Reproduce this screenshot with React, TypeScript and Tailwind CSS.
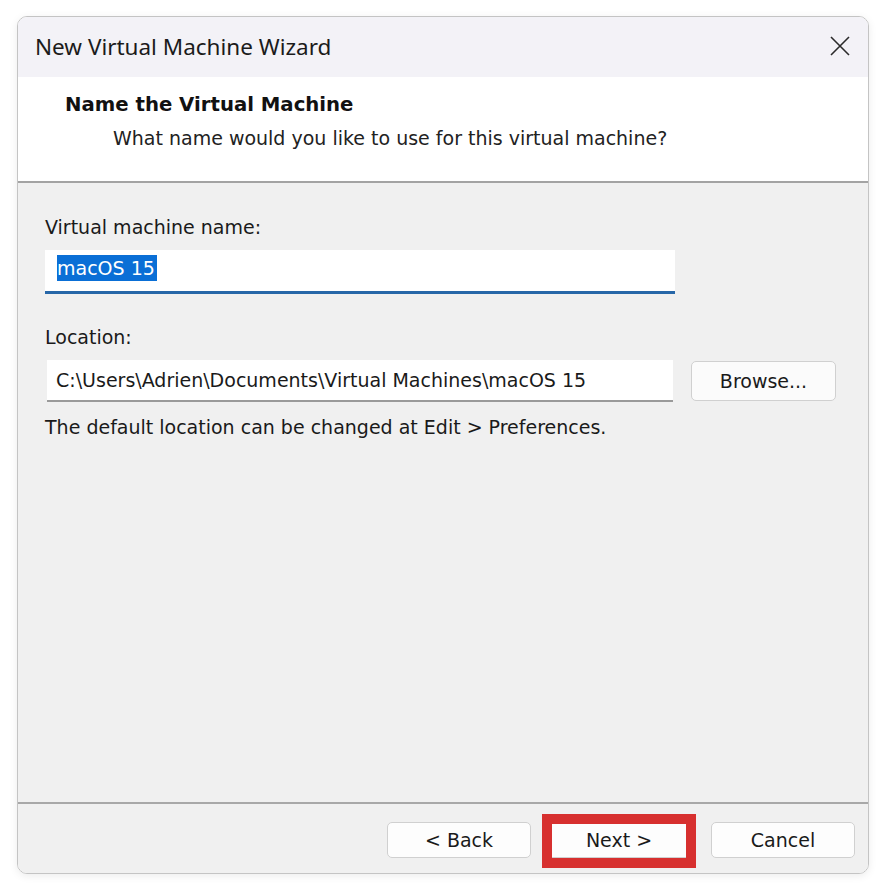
import React from 'react';

const body = { fontFamily: '"DejaVu Sans", Verdana, sans-serif' };
const title = { fontFamily: '"Noto Sans", "Open Sans", sans-serif' };

const Button = ({ label, highlight }: { label: string; highlight?: boolean }) => (
  <div className="relative">
    <button
      className="w-[144px] h-[36px] rounded-[5px] border border-[#d0d0d0] bg-[#fdfdfd] text-[19px] text-[#1a1a1a] flex items-center justify-center"
      style={body}
    >
      {label}
    </button>
    {highlight && (
      <div className="absolute -top-[8px] -bottom-[10px] -left-[5px] -right-[5px] border-[10px] border-[#d7302f] pointer-events-none" />
    )}
  </div>
);

export default function App() {
  return (
    <div className="w-[888px] h-[892px] bg-white pt-[16px] pl-[17px]">
      <div className="w-[852px] h-[858px] rounded-[10px] border border-[#c4c4c4] shadow-[0_2px_8px_rgba(0,0,0,0.08)] overflow-hidden flex flex-col">
        {/* title bar */}
        <div className="h-[60px] bg-[#f3f2f7] flex items-center justify-between pl-[17px] pr-[17px]">
          <span className="text-[22.5px] text-[#1b1b1b]" style={title}>
            New Virtual Machine Wizard
          </span>
          <svg width="22" height="22" viewBox="0 0 22 22" className="mt-[-2px]">
            <path d="M2 2 L20 20 M20 2 L2 20" stroke="#2b2b2b" strokeWidth="1.6" />
          </svg>
        </div>

        {/* header */}
        <div className="h-[106px] bg-white border-b-2 border-[#a3a3a3] pt-[16px] pl-[47px]" style={body}>
          <div className="text-[19.7px] font-bold text-[#111] leading-[24px]">Name the Virtual Machine</div>
          <div className="text-[19px] text-[#222] leading-[24px] mt-[9px] pl-[48px]">
            What name would you like to use for this virtual machine?
          </div>
        </div>

        {/* body */}
        <div className="flex-1 bg-[#f0f0f0] pt-[33px] pl-[27px] text-[19px] text-[#1a1a1a]" style={body}>
          <div className="leading-[22px]">Virtual machine name:</div>
          <div className="mt-[12px] w-[630px] h-[44px] bg-white border-b-[3px] border-[#2767a8] pl-[12px] pt-[4px]">
            <span className="inline-block bg-[#0a6fd6] text-white leading-[26px] pr-[2px]">macOS 15</span>
          </div>

          <div className="mt-[32px] leading-[22px]">Location:</div>
          <div className="mt-[12px] flex items-center">
            <div className="w-[626px] h-[42px] ml-[2px] bg-white border-b-2 border-[#9a9a9a] pl-[9px] flex items-center">
              C:\Users\Adrien\Documents\Virtual Machines\macOS 15
            </div>
            <button className="ml-[18px] w-[145px] h-[40px] rounded-[5px] border border-[#d0d0d0] bg-[#fbfbfb] text-[19px] text-[#1a1a1a]">
              Browse...
            </button>
          </div>
          <div className="mt-[14px] leading-[22px]">The default location can be changed at Edit &gt; Preferences.</div>
        </div>

        {/* footer */}
        <div className="h-[71px] bg-[#f0f0f0] border-t-2 border-[#a8a8a8] flex justify-end items-start pt-[18px] pr-[13px]">
          <Button label="< Back" />
          <div className="ml-[16px] mr-[20px]">
            <Button label="Next >" highlight />
          </div>
          <Button label="Cancel" />
        </div>
      </div>
    </div>
  );
}
